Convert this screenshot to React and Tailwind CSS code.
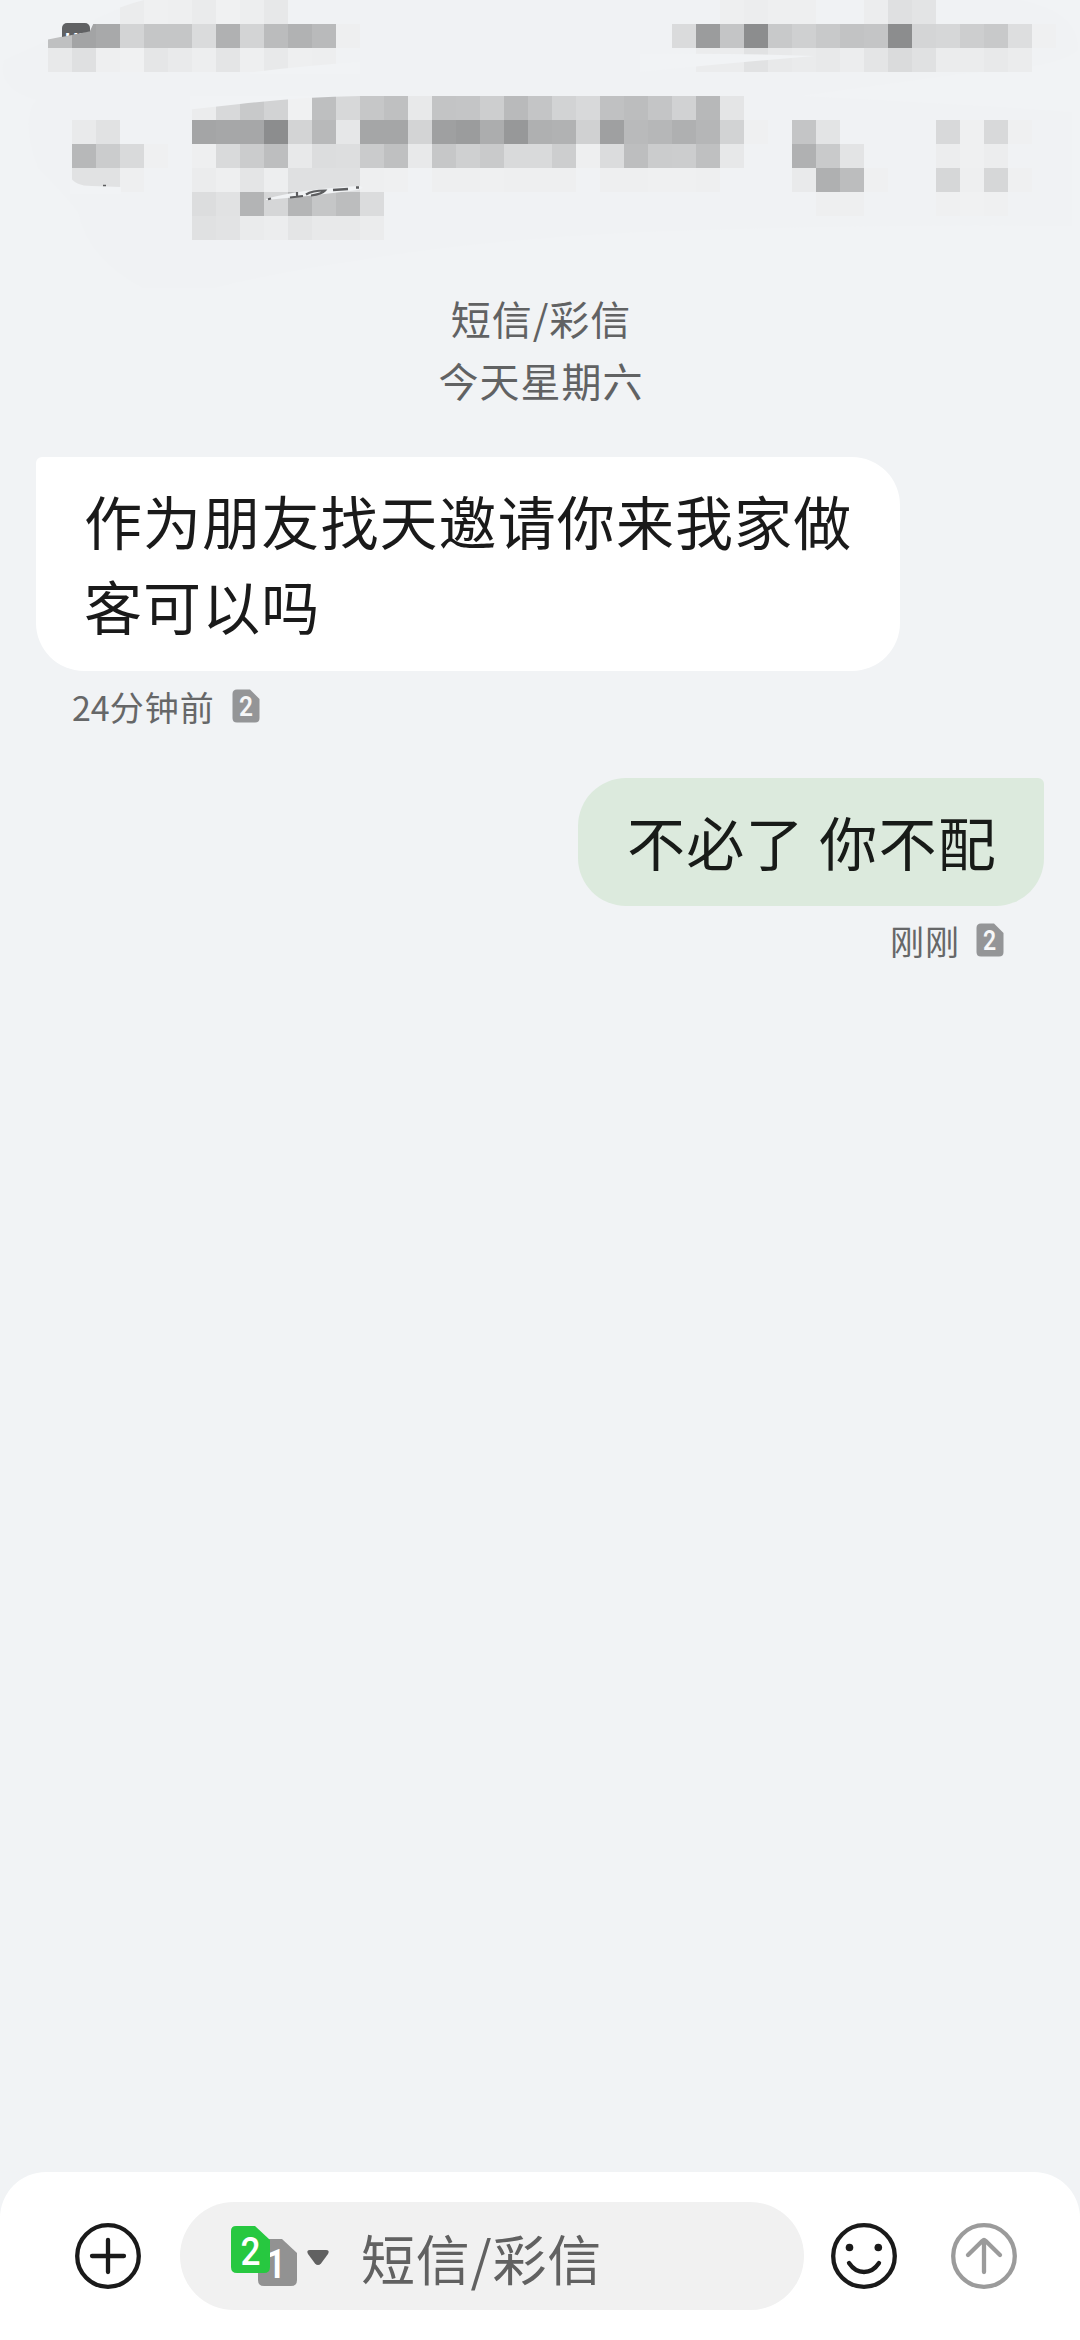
import React from "react";

// grey level per 24px cell, ".." is an empty cell
const MOSAIC = [
  { row: 0, col: 5, cells: "eb ef ee ea f0 ed e7" },
  { row: 0, col: 30, cells: "ee ec ee ee .. .. ec df e3" },
  { row: 1, col: 2, cells: "bf a3 a8 d3 c5 c5 da b0 d3 bb b1 b9 ee" },
  { row: 1, col: 28, cells: "da 9b c4 8c c8 cf c8 c2 c4 8c d4 d6 cd c8 dd ef" },
  { row: 2, col: 2, cells: "e8 df ee f0 e5 e9 ed e4 ee e8 ee ed" },
  { row: 2, col: 29, cells: "eb eb e1 e8 ea e8 ec e4 da e0 eb eb e8 eb" },
  { row: 4, col: 8, cells: "eb d8 c8 d2 f0 be d7 c6 bf e8 c3 c4 cd b9 c4 d2 d8 c0 bc c4 d1 b7 e4" },
  { row: 5, col: 3, cells: "e9 e1" },
  { row: 5, col: 8, cells: "a4 a6 a6 8c d3 b8 e6 a5 a5 d3 9f 9b ac 97 af b1 d0 9f b9 b6 af b5 d2 ef .. c4 e3" },
  { row: 5, col: 39, cells: "d8 ef d8 ef" },
  { row: 6, col: 3, cells: "b7 cb d9 ef" },
  { row: 6, col: 8, cells: "ee d9 cb bd e8 dc dd ca bf e8 c6 cf c9 d9 d9 cd ee db bd cb cc bf e7 .. .. b0 c9 e3" },
  { row: 6, col: 39, cells: "ec ef ec" },
  { row: 7, col: 3, cells: "e1 e1 ee" },
  { row: 7, col: 8, cells: "eb ee e4 ed df df df ee ef .. ee ee ef ee ee ee .. ee ee ef ef ee .. .. .. e9 af bc ef" },
  { row: 7, col: 39, cells: "d6 ee d6 ef" },
  { row: 8, col: 8, cells: "dc e1 b3 d5 b4 c5 bc db" },
  { row: 8, col: 34, cells: "ee ee" },
  { row: 8, col: 39, cells: "ef f0 ef" },
  { row: 9, col: 8, cells: "e0 e2 ea ec e4 e8 e8 eb" },
];

const greyFill = (hex) => {
  const g = parseInt(hex, 16);
  return `rgb(${g},${g + 1},${g + 2})`;
};

const MosaicHeader = () => (
  <svg width="1080" height="288" viewBox="0 0 1080 288" className="block shrink-0">
    <defs>
      <clipPath id="badge-clip">
        <path d="M40 0H92V31L62 37L40 40Z" />
      </clipPath>
    </defs>
    <path
      d="M120 8Q150 0 190 0H1020Q1080 12 1078 50Q1060 68 960 74L800 96Q960 104 1072 112V226Q860 224 640 232Q480 240 360 260Q250 276 170 300Q90 270 78 212Q60 190 38 168Q20 120 36 100Q-4 88 4 60Z"
      fill="#f0f2f4"
    />
    <g shapeRendering="crispEdges">
      {MOSAIC.map(({ row, col, cells }) =>
        cells.split(" ").map((hex, i) =>
          hex === ".." ? null : (
            <rect
              key={`${row}-${col + i}`}
              x={(col + i) * 24}
              y={row * 24}
              width="24"
              height="24"
              fill={greyFill(hex)}
            />
          )
        )
      )}
    </g>

    {/* smears over the cells */}
    <g fill="#f1f3f5">
      <path d="M40 0H144Q120 6 96 18L90 31L48 39.500H40Z" />
      <path d="M190 96H360Q300 97 240 104L190 109.500Z" />
      <path d="M250 72.500Q300 66 360 62V74H250Z" />
      <path d="M640 54Q740 53 815 56Q740 62 640 72Z" />
      <path d="M70 176Q74 186 92 186L121 187V194H70Z" />
      <path d="M266 199Q300 189 360 186Q366 188 358 190Q312 196 266 200Z" />
    </g>

    <g clipPath="url(#badge-clip)">
      <rect x="62" y="23" width="28" height="24" rx="5" fill="#606163" />
      <text x="65" y="46" fontSize="19" fontWeight="700" fill="#fff" fontFamily="Roboto, sans-serif">
        HD
      </text>
    </g>

    <g stroke="#5c5d5f" fill="none">
      <path d="M268 199.300L271 198.500" strokeWidth="2" />
      <path d="M290 197.500L303 196M297 192V197" strokeWidth="2.200" />
      <path d="M306 194.500Q312 190.500 325 190.500Q322 194 311 195.500" strokeWidth="2.200" />
      <path d="M333 190L348 189M356 187.500H359" strokeWidth="2.400" />
      <path d="M103 185.500H106" strokeWidth="1.500" />
    </g>
  </svg>
);

const SimBadge = () => (
  <svg width="28" height="34" viewBox="0 0 28 34" className="block">
    <path d="M5 0.500H18L27.500 10V29Q27.500 33.500 23 33.500H5Q0.500 33.500 0.500 29V5Q0.500 0.500 5 0.500Z" fill="#949597" />
    <text
      x="7"
      y="27"
      textLength="14"
      lengthAdjust="spacingAndGlyphs"
      fontSize="28"
      fontWeight="600"
      fill="#f6f7f8"
      fontFamily="Roboto, sans-serif"
    >
      2
    </text>
  </svg>
);

const SimSwitch = () => (
  <svg width="100" height="62" viewBox="0 0 100 62" className="block">
    <path d="M33 14H52L67 28V55Q67 61 61 61H34Q28 61 28 55V19Q28 14 33 14Z" fill="#929292" />
    <text
      x="36"
      y="53"
      textLength="20"
      lengthAdjust="spacingAndGlyphs"
      fontSize="41"
      fontWeight="600"
      fill="#fff"
      fontFamily="Roboto, sans-serif"
    >
      1
    </text>
    <path d="M6 1H25L40 15V42Q40 48 34 48H7Q1 48 1 42V6Q1 1 6 1Z" fill="#27c840" />
    <text
      x="10.500"
      y="40"
      textLength="20"
      lengthAdjust="spacingAndGlyphs"
      fontSize="39"
      fontWeight="500"
      fill="#fff"
      fontFamily="Roboto, sans-serif"
    >
      2
    </text>
    <path d="M80 25H96Q100 25 98 29L91 38.500Q88 41.500 85 38.500L78 29Q76 25 80 25Z" fill="#616161" />
  </svg>
);

const CircleIcon = ({ color, children }) => (
  <svg
    width="66"
    height="66"
    viewBox="0 0 66 66"
    fill="none"
    stroke={color}
    strokeWidth="4.300"
    strokeLinecap="round"
    strokeLinejoin="round"
    className="block shrink-0"
  >
    <circle cx="33" cy="33" r="30.800" />
    {children}
  </svg>
);

const App = () => {
  return (
    <div className="flex h-[2340px] w-[1080px] flex-col overflow-hidden bg-[#f1f3f5] font-['Noto_Sans_CJK_SC',sans-serif]">
      <MosaicHeader />

      <div className="-mt-px pl-[2px] text-center text-[40px] leading-[62px] tracking-[1px] text-[#616263]">
        <p>短信/彩信</p>
        <p>今天星期六</p>
      </div>

      {/* Messages */}
      <div className="mt-[46px] flex flex-1 flex-col px-9">
        <div className="h-[214px] w-[864px] rounded-[48px] rounded-tl-[6px] bg-white pt-[21px] pl-12 text-[58px] leading-[85px] tracking-[1.1px] text-[#1a1a1a]">
          <p>作为朋友找天邀请你来我家做</p>
          <p>客可以吗</p>
        </div>
        <div className="mt-[11px] ml-9 flex h-12 items-center gap-[17px] text-[34px] text-[#666768]">
          <span>
            24<span className="tracking-[1px]">分钟前</span>
          </span>
          <SimBadge />
        </div>

        <div className="mt-[48px] flex h-[128px] w-[466px] items-center self-end rounded-[48px] rounded-tr-[6px] bg-[#dceadd] pb-px pl-[49px] text-[58px] tracking-[1.3px] whitespace-nowrap text-[#181b18]">
          不必了 你不配
        </div>
        <div className="mt-[10px] mr-10 flex h-12 items-center gap-4 self-end text-[34px] tracking-[1px] text-[#666768]">
          <span>刚刚</span>
          <SimBadge />
        </div>
      </div>

      {/* Input bar */}
      <div className="flex h-[168px] shrink-0 items-start rounded-t-[46px] bg-white pt-[30px] pl-[75px]">
        <div className="flex h-[108px] items-center">
          <CircleIcon color="#1a1a1a">
            <path d="M33 17V49M17 33H49" />
          </CircleIcon>
          <div className="ml-[39px] flex h-[108px] w-[624px] items-center rounded-full bg-[#f1f1f1] pl-[50px]">
            <SimSwitch />
            <span className="mt-[2px] ml-[31px] text-[54px] tracking-[0.800px] text-[#616161]">短信/彩信</span>
          </div>
          <div className="ml-[27px] flex gap-[54px]">
            <CircleIcon color="#1a1a1a">
              <circle cx="18.500" cy="24.500" r="3.800" fill="#1a1a1a" stroke="none" />
              <circle cx="47.300" cy="24.500" r="3.800" fill="#1a1a1a" stroke="none" />
              <path d="M18 40Q24 49 33 49T48 40" />
            </CircleIcon>
            <CircleIcon color="#9b9b9b">
              <path d="M33 49V17M17 32L31.500 17.800Q33 16.500 34.500 17.800L49 32" />
            </CircleIcon>
          </div>
        </div>
      </div>
    </div>
  );
};

export default App;
